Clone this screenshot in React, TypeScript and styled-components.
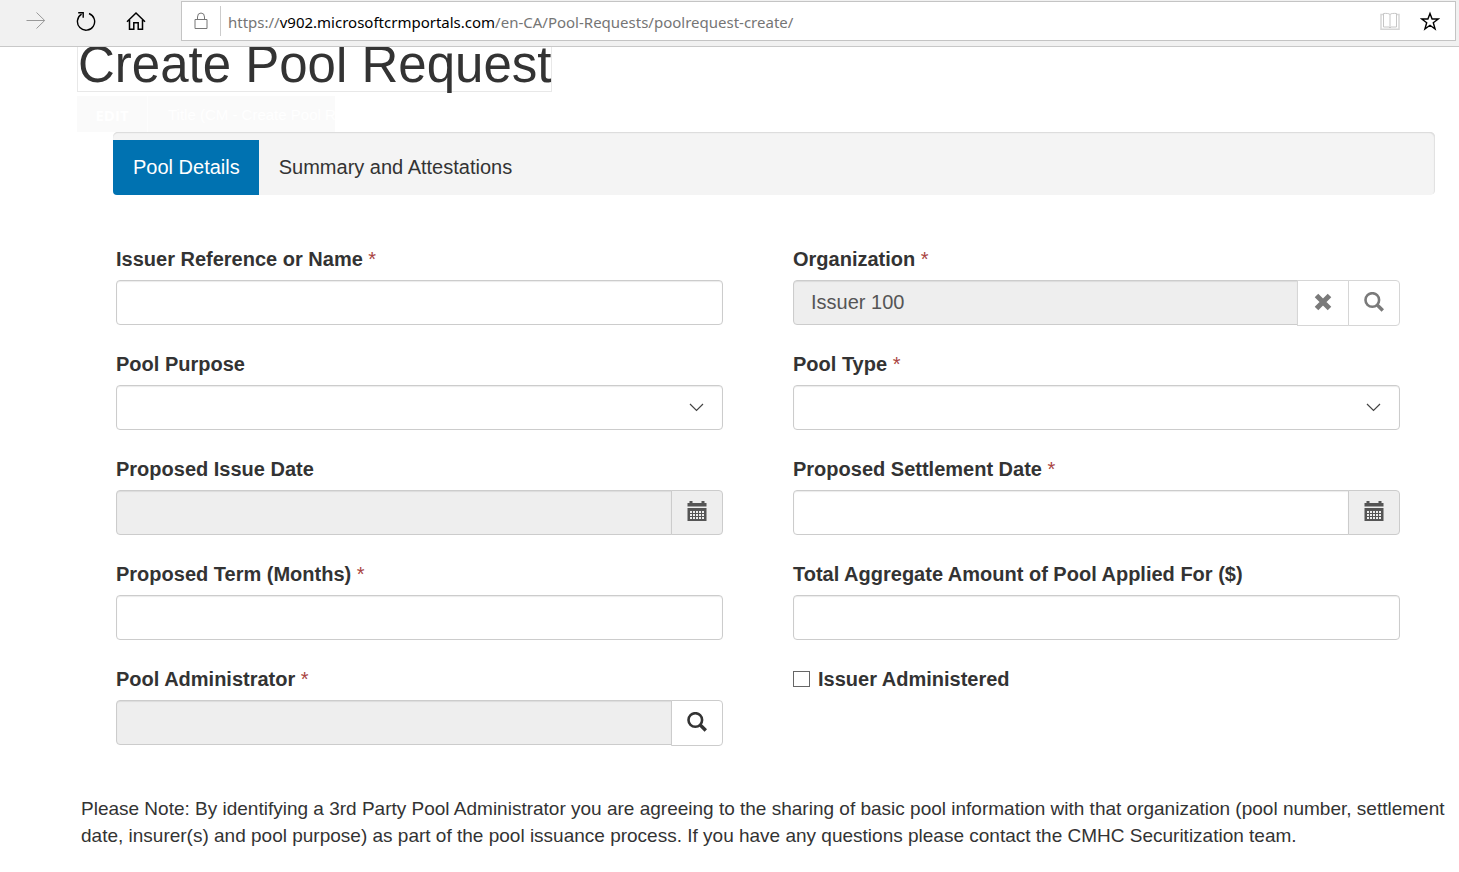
import React from "react";
import styled, { createGlobalStyle, css } from "styled-components";

const GlobalStyle = createGlobalStyle`
  *, *::before, *::after { box-sizing: border-box; }
  body {
    margin: 0;
    background: #fff;
    color: #333;
    font-family: "Liberation Sans", Arial, sans-serif;
    font-size: 20px;
  }
`;

const Page = styled.div`
  min-height: 100vh;
  display: flex;
  flex-direction: column;
`;

/* ---------- Browser bar ---------- */

const Toolbar = styled.header`
  display: flex;
  align-items: flex-start;
  height: 47px;
  padding: 1px 3px 0 11px;
  background: #f1f1f1;
  border-bottom: 1px solid #c8c8c8;
`;

const ToolButton = styled.button`
  display: flex;
  align-items: center;
  justify-content: center;
  width: 50px;
  height: 40px;
  padding: 0;
  border: 0;
  background: none;
  color: #000;

  &:disabled { color: #999; }
`;

const AddressBar = styled.form`
  flex: 1;
  display: flex;
  align-items: center;
  height: 40px;
  margin-left: 20px;
  padding-right: 5px;
  background: #fff;
  border: 1px solid #c4c4c4;
`;

const LockCell = styled.span`
  display: flex;
  align-items: center;
  justify-content: center;
  width: 39px;
  height: 30px;
  border-right: 1px solid #ccc;
`;

const Url = styled.a`
  flex: 1;
  padding: 2px 0 0 7px;
  color: #757575;
  font-family: "Noto Sans", "Open Sans", sans-serif;
  font-size: 15px;
  line-height: 24px;
  text-decoration: none;
  white-space: nowrap;
`;

const Domain = styled.span`
  color: #000;
`;

const AddressButton = styled(ToolButton)`
  width: 40px;
  height: 36px;
`;

/* ---------- Page content ---------- */

const Main = styled.main`
  flex: 1;
  overflow: hidden;
  padding: 0 12px 20px 77px;
`;

const Title = styled.h1`
  width: fit-content;
  margin: -9px 0 4px;
  border: 1px solid #e8e8e8;
  font-size: 51px;
  font-weight: 400;
  line-height: 52px;
  white-space: nowrap;
`;

const EditBar = styled.div`
  display: flex;
  width: 258px;
  height: 36px;
  background: #fafafa;
`;

const EditButton = styled.button`
  flex: none;
  width: 71px;
  padding: 2px 0 0;
  border: 0;
  border-right: 1px solid #fdfdfd;
  background: none;
  color: #fff;
  font: 700 15px "Open Sans", sans-serif;
`;

const EditTitle = styled.span`
  padding-left: 20px;
  color: #fff;
  font-size: 15px;
  line-height: 37px;
  white-space: nowrap;
`;

const Tabs = styled.nav`
  display: flex;
  align-items: flex-end;
  height: 63px;
  margin: 0 12px 0 36px;
  border-radius: 5px;
  background: #f4f4f4;
  box-shadow: inset 0 1px 1px #dcdcdc, inset -1px 1px 1px #e2e2e2;
`;

const Tab = styled.a<{ $active?: boolean }>`
  padding: 0 19px 0 20px;
  border-bottom-left-radius: 4px;
  color: #333;
  line-height: 55px;
  text-decoration: none;

  ${(p) =>
    p.$active &&
    css`
      background: #0072b1;
      color: #fff;
    `}
`;

const Form = styled.form`
  display: grid;
  grid-template-columns: 1fr 1fr;
  gap: 25px 70px;
  margin: 50px 47px 50px 39px;
`;

const Field = styled.div`
  display: flex;
  flex-direction: column;
  gap: 7px;
  min-width: 0;
`;

const Label = styled.label`
  font-weight: 700;
  line-height: 28px;
`;

const Star = styled.span`
  color: #a94442;
  font-weight: 400;
`;

const control = css`
  width: 100%;
  height: 45px;
  padding: 0 17px;
  border: 1px solid #ccc;
  border-radius: 4px;
  background: #fff;
  box-shadow: inset 0 1px 1px rgba(0, 0, 0, 0.08);
  color: #555;
  font: 20px "Liberation Sans", Arial, sans-serif;
`;

const Input = styled.input`
  ${control}

  &:read-only { background: #eee; }
`;

const SelectBox = styled.div`
  position: relative;
  height: 45px;

  svg {
    position: absolute;
    top: 18px;
    right: 18px;
    pointer-events: none;
  }
`;

const Select = styled.select`
  ${control}
  appearance: none;
`;

const Group = styled.div`
  display: flex;
  align-items: flex-start;
  height: 45px;

  ${Input} {
    flex: 1;
    min-width: 0;
    border-radius: 4px 0 0 4px;
  }
`;

const GroupButton = styled.button<{ $tone: "plain" | "muted" | "addon" }>`
  flex: none;
  display: flex;
  align-items: center;
  justify-content: center;
  width: 52px;
  height: ${(p) => (p.$tone === "addon" ? 45 : 46)}px;
  margin-left: -1px;
  padding: 0 1px 3px 0;
  border: 1px solid ${(p) => (p.$tone === "muted" ? "#d6d6d6" : "#ccc")};
  background: ${(p) => (p.$tone === "addon" ? "#eee" : "#fff")};
  color: ${(p) => ({ plain: "#333", muted: "#7a7a7a", addon: "#555" })[p.$tone]};

  &:last-child { border-radius: 0 4px 4px 0; }
`;

const CheckField = styled.div`
  display: flex;
  align-items: center;
  gap: 8px;
  height: 28px;
`;

const Checkbox = styled.input`
  appearance: none;
  width: 17px;
  height: 16px;
  margin: 0;
  border: 1px solid #666;
  background: #fff;
`;

const Note = styled.p`
  margin: 0 0 0 4px;
  font-size: 19px;
  line-height: 27px;
`;

/* ---------- Icons ---------- */

const ForwardIcon = () => (
  <svg width="20" height="20" viewBox="0 0 20 20" fill="none" stroke="currentColor">
    <path d="M0.5 9.5h18M10.5 1.500l8.200 8-8.200 8" />
  </svg>
);

const RefreshIcon = () => (
  <svg width="20" height="20" viewBox="0 0 20 20" fill="none" stroke="currentColor" strokeWidth="1.4">
    <path d="M13 2.500A8.600 8.600 0 1 1 5.600 3.200" />
    <path d="M2.200 1.700h5v5" />
  </svg>
);

const HomeIcon = () => (
  <svg width="20" height="20" viewBox="0 0 20 20" fill="none" stroke="currentColor" strokeWidth="1.5">
    <path d="M1 10.800L10 2l9 8.800M3.500 9v9.200h4.300v-6.400h4.400v6.400h4.300V9" />
  </svg>
);

const LockIcon = () => (
  <svg width="14" height="18" viewBox="0 0 14 18" fill="none" stroke="#777">
    <path d="M1 7.500h12v9H1zM3.500 7.500V5a3.500 4 0 0 1 7 0v2.500" />
  </svg>
);

const BookIcon = () => (
  <svg width="20" height="20" viewBox="0 0 20 20" fill="none" stroke="#c6c6c6">
    <path d="M3.500 3.500H1v14.700h18V3.500H16.500" stroke="#d6d6d6" strokeWidth="1.500" />
    <path d="M10 3.500C9 2.300 6 2.300 3.500 2.500v13.500h5.500l1 1 1-1h5.500V2.500c-2.500-.2-5.500-.2-6.500 1zV17" />
  </svg>
);

const StarIcon = () => (
  <svg width="20" height="20" viewBox="0 0 20 20" fill="none" stroke="currentColor" strokeWidth="1.4">
    <path d="M10 2.400L12.100 8H18.200L13.300 11.800L15.100 18L10 14.300L4.900 18L6.700 11.800L1.800 8H7.900Z" />
  </svg>
);

const ChevronIcon = () => (
  <svg width="16" height="10" viewBox="0 0 16 10" fill="none" stroke="#444" strokeWidth="1.2">
    <path d="M1 1L7.500 7.500L14 1" />
  </svg>
);

const SearchIcon = () => (
  <svg width="20" height="20" viewBox="0 0 20 20" fill="none" stroke="currentColor">
    <circle cx="8.300" cy="8" r="6.800" strokeWidth="2.600" />
    <path d="M13 12.700l5.800 5.800" strokeWidth="3.400" />
  </svg>
);

const RemoveIcon = () => (
  <svg width="18" height="18" viewBox="0 0 18 18" stroke="currentColor" strokeWidth="5">
    <path d="M2.500 2.500l13 13M15.500 2.500l-13 13" />
  </svg>
);

const CalendarIcon = () => (
  <svg width="20" height="20" viewBox="0 0 20 20" fill="currentColor">
    <path d="M2.500 0h3v2h9V0h3v2H19.500v3.500H.5V2h2z" />
    <path
      fillRule="evenodd"
      d="M.5 7h19v13H.5zM3 10v2h2v-2zM6 10v2h2v-2zM9 10v2h2v-2zM12 10v2h2v-2zM15 10v2h2v-2zM3 13v2h2v-2zM6 13v2h2v-2zM9 13v2h2v-2zM12 13v2h2v-2zM15 13v2h2v-2zM3 16v2h2v-2zM6 16v2h2v-2zM9 16v2h2v-2zM12 16v2h2v-2zM15 16v2h2v-2z"
    />
  </svg>
);

/* ---------- Form parts ---------- */

type FieldProps = {
  id: string;
  label: string;
  required?: boolean;
  children: React.ReactNode;
};

const FormField = ({ id, label, required, children }: FieldProps) => (
  <Field>
    <Label htmlFor={id}>
      {label}
      {required && <Star> *</Star>}
    </Label>
    {children}
  </Field>
);

const Dropdown = ({ id }: { id: string }) => (
  <SelectBox>
    <Select id={id} defaultValue="">
      <option value="" />
    </Select>
    <ChevronIcon />
  </SelectBox>
);

const DateInput = ({ id, readOnly }: { id: string; readOnly?: boolean }) => (
  <Group>
    <Input id={id} type="text" readOnly={readOnly} />
    <GroupButton type="button" $tone="addon" aria-label="Choose a date">
      <CalendarIcon />
    </GroupButton>
  </Group>
);

export default function App() {
  return (
    <Page>
      <GlobalStyle />
      <Toolbar>
        <ToolButton type="button" aria-label="Forward" disabled>
          <ForwardIcon />
        </ToolButton>
        <ToolButton type="button" aria-label="Refresh">
          <RefreshIcon />
        </ToolButton>
        <ToolButton type="button" aria-label="Home">
          <HomeIcon />
        </ToolButton>
        <AddressBar>
          <LockCell>
            <LockIcon />
          </LockCell>
          <Url href="#">
            https://<Domain>v902.microsoftcrmportals.com</Domain>/en-CA/Pool-Requests/poolrequest-create/
          </Url>
          <AddressButton type="button" aria-label="Reading view">
            <BookIcon />
          </AddressButton>
          <AddressButton type="button" aria-label="Add to favorites">
            <StarIcon />
          </AddressButton>
        </AddressBar>
      </Toolbar>

      <Main>
        <Title>Create Pool Request</Title>
        <EditBar>
          <EditButton type="button">EDIT</EditButton>
          <EditTitle>Title (CM - Create Pool R</EditTitle>
        </EditBar>

        <Tabs>
          <Tab href="#details" $active>
            Pool Details
          </Tab>
          <Tab href="#summary">Summary and Attestations</Tab>
        </Tabs>

        <Form>
          <FormField id="issuer" label="Issuer Reference or Name" required>
            <Input id="issuer" type="text" />
          </FormField>
          <FormField id="organization" label="Organization" required>
            <Group>
              <Input id="organization" type="text" defaultValue="Issuer 100" readOnly />
              <GroupButton type="button" $tone="muted" aria-label="Clear organization">
                <RemoveIcon />
              </GroupButton>
              <GroupButton type="button" $tone="muted" aria-label="Find organization">
                <SearchIcon />
              </GroupButton>
            </Group>
          </FormField>
          <FormField id="purpose" label="Pool Purpose">
            <Dropdown id="purpose" />
          </FormField>
          <FormField id="type" label="Pool Type" required>
            <Dropdown id="type" />
          </FormField>
          <FormField id="issue-date" label="Proposed Issue Date">
            <DateInput id="issue-date" readOnly />
          </FormField>
          <FormField id="settlement-date" label="Proposed Settlement Date" required>
            <DateInput id="settlement-date" />
          </FormField>
          <FormField id="term" label="Proposed Term (Months)" required>
            <Input id="term" type="text" />
          </FormField>
          <FormField id="amount" label="Total Aggregate Amount of Pool Applied For ($)">
            <Input id="amount" type="text" />
          </FormField>
          <FormField id="administrator" label="Pool Administrator" required>
            <Group>
              <Input id="administrator" type="text" readOnly />
              <GroupButton type="button" $tone="plain" aria-label="Find pool administrator">
                <SearchIcon />
              </GroupButton>
            </Group>
          </FormField>
          <CheckField>
            <Checkbox id="administered" type="checkbox" />
            <Label htmlFor="administered">Issuer Administered</Label>
          </CheckField>
        </Form>

        <Note>
          Please Note: By identifying a 3rd Party Pool Administrator you are agreeing to the sharing of basic pool
          information with that organization (pool number, settlement date, insurer(s) and pool purpose) as part of
          the pool issuance process. If you have any questions please contact the CMHC Securitization team.
        </Note>
      </Main>
    </Page>
  );
}
